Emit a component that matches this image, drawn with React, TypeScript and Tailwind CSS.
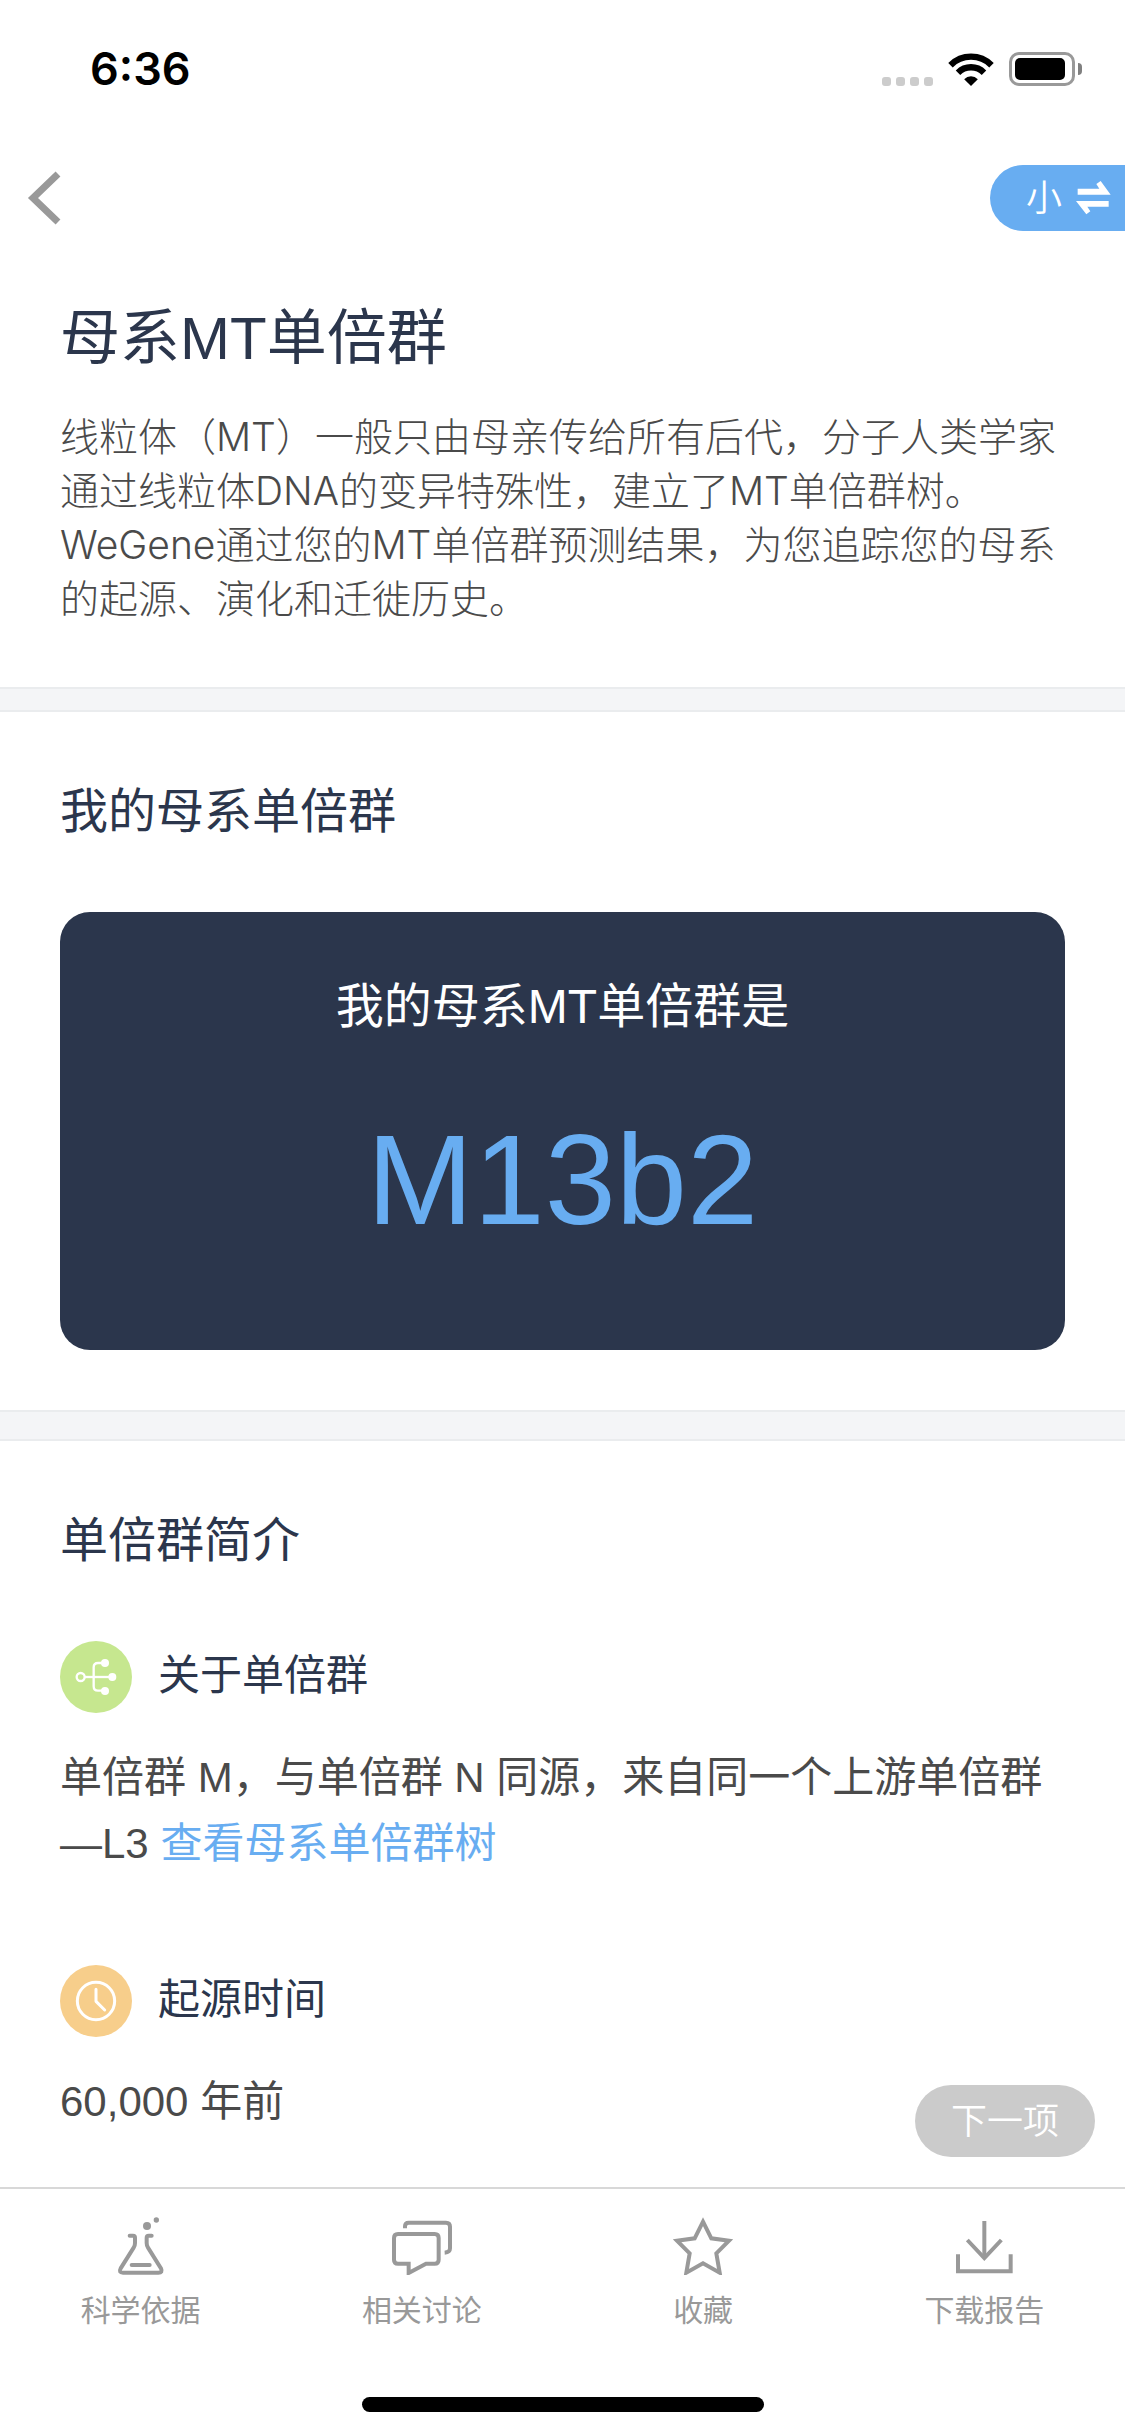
import React from 'react';

const StatusBar: React.FC = () => {
  return (
    <div className="flex h-[132px] items-center justify-between pt-1.5 pr-[43px] pl-[90px]">
      <span className="font-['Inter',sans-serif] text-[45px] leading-[60px] font-semibold text-black">6:36</span>
      <div className="flex items-end">
        <div className="mr-[15px] flex gap-[5px]">
          <span className="size-[9px] rounded-[3px] bg-[#cccccc]" />
          <span className="size-[9px] rounded-[3px] bg-[#cccccc]" />
          <span className="size-[9px] rounded-[3px] bg-[#cccccc]" />
          <span className="size-[9px] rounded-[3px] bg-[#cccccc]" />
        </div>
        <svg className="mr-[15px] h-[33px] w-[46px]" viewBox="0 0 136 99" fill="none">
          <path d="M6.5 36.5A87 87 0 0 1 129.5 36.5" stroke="#000" strokeWidth="19" />
          <path d="M29 59A55 55 0 0 1 107 59" stroke="#000" strokeWidth="19" />
          <path d="M68 99L47.5 78.5A29 29 0 0 1 88.5 78.5Z" fill="#000" />
        </svg>
        <div className="flex items-center">
          <div className="h-[34px] w-[66px] rounded-[10px] border-3 border-[#999999] p-[3px]">
            <div className="h-full w-[50px] rounded-[5px] bg-black" />
          </div>
          <span className="ml-[3px] h-3 w-1 rounded-r-full bg-[#808080]" />
        </div>
      </div>
    </div>
  );
};

const Header: React.FC = () => {
  return (
    <header className="flex h-[132px] items-center justify-between pl-[26px]">
      <button type="button" aria-label="返回">
        <svg className="h-[54px] w-[36px]" viewBox="0 0 36 54" fill="none">
          <path d="M32 3L7 27L32 51" stroke="#999999" strokeWidth="7" />
        </svg>
      </button>
      <button
        type="button"
        className="flex h-[66px] items-center gap-[14px] rounded-l-full bg-[#68adf1] pr-[14px] pl-9 text-[36px] font-[350] text-white"
      >
        <span className="pt-0.5">小</span>
        <svg className="h-[34px] w-[35px]" viewBox="0 0 105 102" fill="#fff">
          <path d="M5 23H70L61 9L74 0L104 41H5Z" />
          <path d="M98 60H0L31 100L43 91L34 77H98Z" />
        </svg>
      </button>
    </header>
  );
};

const Divider: React.FC<{ className: string }> = ({ className }) => {
  return <div className={`border-y-2 border-[#eaecee] bg-[#f4f5f7] ${className}`} />;
};

const HaploIcon: React.FC = () => {
  return (
    <svg className="size-[72px]" viewBox="0 0 216 216" fill="none">
      <circle cx="108" cy="108" r="108" fill="#c6e78f" />
      <g stroke="#fff" strokeWidth="7">
        <circle cx="62" cy="108" r="12" />
        <path d="M74 108H150" />
        <path d="M135 66H114Q101 66 101 79V136Q101 149 114 149H135" />
      </g>
      <circle cx="135" cy="66" r="12" fill="#fff" />
      <circle cx="157" cy="108" r="12" fill="#fff" />
      <circle cx="135" cy="150" r="12" fill="#fff" />
    </svg>
  );
};

const ClockIcon: React.FC = () => {
  return (
    <svg className="size-[72px]" viewBox="0 0 216 216" fill="none">
      <circle cx="108" cy="108" r="108" fill="#f7ce8b" />
      <g stroke="#fff" strokeWidth="9" strokeLinecap="round" strokeLinejoin="round">
        <circle cx="108" cy="108" r="56" />
        <path d="M108 73V109L134 135" />
      </g>
    </svg>
  );
};

const FlaskIcon: React.FC = () => {
  return (
    <svg className="size-[60px]" viewBox="0 0 180 180" fill="none" stroke="#999" strokeWidth="12" strokeLinecap="round">
      <path d="M56 62H66Q72 62 72 68V84Q72 92 68 98L29 160Q22 173 36 173H142Q156 173 150 160L111 98Q107 92 107 84V68Q107 62 113 62H122" />
      <path d="M62 150H116" />
      <circle cx="108" cy="33" r="12" fill="#999" stroke="none" />
      <circle cx="136" cy="15" r="8" fill="#999" stroke="none" />
    </svg>
  );
};

const CommentsIcon: React.FC = () => {
  return (
    <svg className="size-[60px]" viewBox="0 0 180 180" fill="none" stroke="#999" strokeWidth="12">
      <path d="M18 57H128Q140 57 140 69V134Q140 146 128 146H102L50 174V146H18Q6 146 6 134V69Q6 57 18 57Z" />
      <path d="M39 40V34Q39 23 50 23H162Q174 23 174 35V100Q174 112 158 113" />
    </svg>
  );
};

const StarIcon: React.FC = () => {
  return (
    <svg className="size-[60px]" viewBox="0 0 180 180" fill="none" stroke="#999" strokeWidth="12">
      <path d="M90 20L115 70L168 77L130 115L140 173L90 145L40 173L50 115L12 77L65 70Z" />
    </svg>
  );
};

const DownloadIcon: React.FC = () => {
  return (
    <svg className="size-[60px]" viewBox="0 0 180 180" fill="none" stroke="#999" strokeWidth="12">
      <path d="M91 18V128" />
      <path d="M40 75L91 129L142 75" />
      <path d="M12 118V169H170V118" />
    </svg>
  );
};

const tabs = [
  { label: '科学依据', icon: FlaskIcon },
  { label: '相关讨论', icon: CommentsIcon },
  { label: '收藏', icon: StarIcon },
  { label: '下载报告', icon: DownloadIcon },
];

const App: React.FC = () => {
  return (
    <div
      lang="zh-CN"
      className="flex min-h-screen flex-col bg-white font-['Liberation_Sans','Noto_Sans_CJK_SC',sans-serif] text-[#4a4a4a]"
    >
      <StatusBar />
      <Header />

      <main className="relative flex-1">
        <section className="px-[60px] pt-[33px] pb-[61px]">
          <h1 className="text-[60px] leading-[84px] text-[#2b364c]">母系MT单倍群</h1>
          <p className="mt-[29px] font-['Inter','Noto_Sans_CJK_SC',sans-serif] text-[39px] leading-[54px] font-light">
            线粒体（MT）一般只由母亲传给所有后代，分子人类学家通过线粒体DNA的变异特殊性，建立了MT单倍群树。WeGene通过您的MT单倍群预测结果，为您追踪您的母系的起源、演化和迁徙历史。
          </p>
        </section>

        <Divider className="h-[25px]" />

        <section className="px-[60px] pt-[66px] pb-[60px]">
          <h2 className="text-[48px] leading-[68px] text-[#2b364c]">我的母系单倍群</h2>
          <div className="mt-[66px] rounded-[30px] bg-[#2b364c] pt-[61px] pb-[100px] text-center">
            <p className="text-[48px] leading-[68px] text-white">我的母系MT单倍群是</p>
            <p className="mt-[69px] text-[128px] leading-[140px] text-[#68adf1]">M13b2</p>
          </div>
        </section>

        <Divider className="h-[31px]" />

        <section className="px-[60px] pt-[66px] pb-12 text-[42px] leading-[66px]">
          <h2 className="text-[48px] leading-[68px] text-[#2b364c]">单倍群简介</h2>

          <div className="mt-[66px] flex items-center gap-[26px]">
            <HaploIcon />
            <h3 className="pb-0.5 text-[#2b364c]">关于单倍群</h3>
          </div>
          <p className="mt-8">
            单倍群 M，与单倍群 N 同源，来自同一个上游单倍群<span>—L3</span>{' '}
            <a href="#tree" className="text-[#68adf1]">
              查看母系单倍群树
            </a>
          </p>

          <div className="mt-[88px] flex items-center gap-[26px]">
            <ClockIcon />
            <h3 className="pb-0.5 text-[#2b364c]">起源时间</h3>
          </div>
          <p className="mt-8">60,000 年前</p>
        </section>

        <button
          type="button"
          className="absolute right-[30px] bottom-[30px] h-[72px] rounded-full bg-[#cbcbcb] px-9 pt-0.5 text-[36px] font-[350] text-white"
        >
          下一项
        </button>
      </main>

      <footer className="border-t-2 border-[#d8d8d8] pt-[26px] pb-6">
        <nav className="grid grid-cols-4">
          {tabs.map(({ label, icon: Icon }) => (
            <button key={label} type="button" className="flex flex-col items-center gap-4 text-[30px] leading-[40px] text-[#999999]">
              <Icon />
              <span>{label}</span>
            </button>
          ))}
        </nav>
        <div className="mx-auto mt-[66px] h-[15px] w-[402px] rounded-full bg-black" />
      </footer>
    </div>
  );
};

export default App;
